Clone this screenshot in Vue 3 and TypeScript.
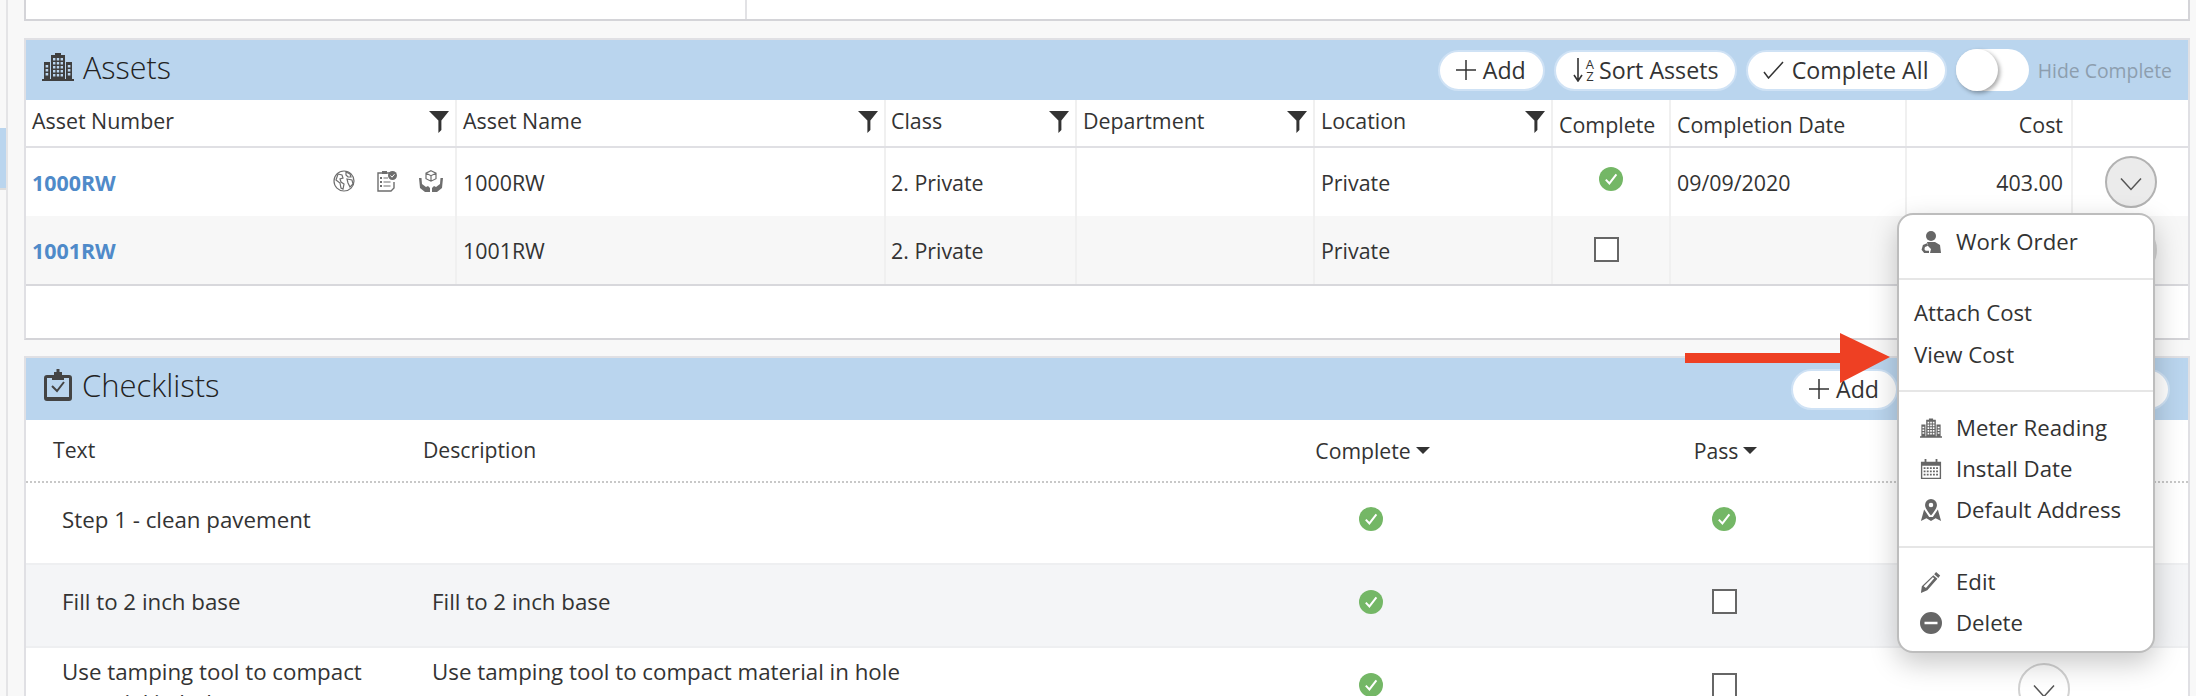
<script setup lang="ts">
const grid = (x0: number, y0: number, cols: number, rows: number, w: number, h: number, gx: number, gy: number): string => {
  let d = ''
  for (let c = 0; c < cols; c++) {
    for (let r = 0; r < rows; r++) {
      d += `M${x0 + c * gx} ${y0 + r * gy}h${w}v${h}h${-w}z`
    }
  }
  return d
}
const buildingPath =
  'M13 0h6v2h-6zM9 2h14v24H9zM2 9h6v17H2zM24 9h6v17h-6zM0 26h32v2H0z' +
  grid(11, 5, 3, 5, 2.4, 2.4, 3.8, 4) +
  grid(3.6, 12, 1, 3, 2.6, 2.4, 0, 4) +
  grid(25.8, 12, 1, 3, 2.6, 2.4, 0, 4)
const calendarPath = 'M1 4h4V1h2v3h10V1h2v3h4v19H1zM2.5 8.5v13h19v-13z'
const calendarCells = grid(4, 10, 5, 3, 2, 2, 3.4, 3.6)

interface AssetRow { num: string; name: string; cls: string; loc: string; done: boolean; date: string; cost: string; icons: boolean; open: boolean }
const assetCols = [
  { label: 'Asset Number', filter: true },
  { label: 'Asset Name', filter: true },
  { label: 'Class', filter: true },
  { label: 'Department', filter: true },
  { label: 'Location', filter: true },
  { label: 'Complete', filter: false },
  { label: 'Completion Date', filter: false },
  { label: 'Cost', filter: false, right: true },
  { label: '', filter: false }
]
const assets: AssetRow[] = [
  { num: '1000RW', name: '1000RW', cls: '2. Private', loc: 'Private', done: true, date: '09/09/2020', cost: '403.00', icons: true, open: true },
  { num: '1001RW', name: '1001RW', cls: '2. Private', loc: 'Private', done: false, date: '', cost: '', icons: false, open: false }
]
const checks = [
  { text: 'Step 1 - clean pavement', desc: '', complete: true, pass: true, tall: false },
  { text: 'Fill to 2 inch base', desc: 'Fill to 2 inch base', complete: true, pass: false, tall: false },
  { text: 'Use tamping tool to compact material in hole', desc: 'Use tamping tool to compact material in hole', complete: true, pass: false, tall: true }
]
</script>

<template>
  <div class="page">
    <svg class="defs" aria-hidden="true">
      <symbol id="i-build" viewBox="0 0 32 28"><path fill="currentColor" fill-rule="evenodd" :d="buildingPath" /></symbol>
      <symbol id="i-funnel" viewBox="0 0 20 22"><path fill="currentColor" d="M0 0h20l-7.6 9.6V19l-3 3V9.6z" /></symbol>
      <symbol id="i-check" viewBox="0 0 24 24"><circle cx="12" cy="12" r="12" fill="#74b766" /><path d="M6.8 12.6l3.6 3.8 7-9" fill="none" stroke="#fff" stroke-width="2" /></symbol>
      <symbol id="i-chev" viewBox="0 0 22 14"><path d="M1 1.5l10 11 10-11" fill="none" stroke="currentColor" stroke-width="1.5" /></symbol>
      <symbol id="i-globe" viewBox="0 0 22 22">
        <circle cx="11" cy="11" r="10" fill="none" stroke="currentColor" stroke-width="1.2" />
        <path fill="none" stroke="currentColor" stroke-width="1.2" d="M5 4l4 1 1 3-3 1 1 3 3 2-1 5-2-1-1-5-4-3zM13 2l4 2 1 3-3 0-2-2zM14 9l5 1 1 4-3 3-2-4z" />
      </symbol>
      <symbol id="i-clip" viewBox="0 0 20 22">
        <path fill="none" stroke="currentColor" stroke-width="1.4" d="M14 3H1v18h13l3-3v-6" />
        <path fill="currentColor" d="M5 1h5v3H5zM3 7h2v2H3zM3 11h2v2H3zM3 15h2v2H3zM6.5 7.5H11v1H6.5zM6.5 11.500h7v1h-7zM6.500 15.500h7v1h-7z" />
        <circle cx="15.500" cy="5.500" r="4.500" fill="currentColor" />
        <path d="M13.500 5.500l1.500 1.700 2.500-3" fill="none" stroke="#fff" stroke-width="1" />
      </symbol>
      <symbol id="i-hands" viewBox="0 0 24 22">
        <path fill="none" stroke="currentColor" stroke-width="1.200" d="M12 .7l5 2.500v5.500l-5 2.500-5-2.500V3.200zM7 3.200l5 2.500 5-2.500M12 5.700v5.500" />
        <path fill="currentColor" d="M0 8h2.500l.5 6 4 3 2-1 2 2v4H6l-5-4zM24 8h-2.500l-.5 6-4 3-2-1-2 2v4h5l5-4z" />
      </symbol>
      <symbol id="i-person" viewBox="0 0 20 22">
        <circle cx="10" cy="5" r="5" fill="currentColor" />
        <path fill="currentColor" d="M6 11h8l5 3 1 8H9l1-4-3-3z" />
        <path fill="none" stroke="currentColor" stroke-width="2.600" d="M6.500 13.500l-3.500 1.500-1 3.500 2 2.500h4" />
      </symbol>
      <symbol id="i-cal" viewBox="0 0 24 24">
        <path fill="currentColor" fill-rule="evenodd" :d="calendarPath" />
        <path fill="currentColor" :d="calendarCells" />
      </symbol>
      <symbol id="i-pin" viewBox="0 0 22 24">
        <path fill="currentColor" fill-rule="evenodd" d="M11 0a6.500 6.500 0 0 1 6.500 6.500C17.500 10 13.500 15 11 18 8.500 15 4.500 10 4.500 6.500A6.500 6.500 0 0 1 11 0zm0 4a2.500 2.500 0 1 0 0 5 2.500 2.500 0 0 0 0-5z" />
        <path fill="currentColor" d="M3.500 11.500l5.500 8h4l5.500-8L22 24l-6-3-5 3-5-3-6 3z" />
      </symbol>
      <symbol id="i-pencil" viewBox="0 0 22 24">
        <path fill="currentColor" d="M16.500 1l4.500 4-2 2.500-4.500-4zM13.500 4.500l4.500 4L7 21l-7 3 1-7.500zM3 16.500l2.500 2 9-10.500-1.500-1.200z" fill-rule="evenodd" />
      </symbol>
      <symbol id="i-minus" viewBox="0 0 22 22">
        <path fill="currentColor" fill-rule="evenodd" d="M11 0a11 11 0 1 1 0 22 11 11 0 0 1 0-22zM4.500 9.800v2.400h13V9.800z" />
      </symbol>
      <symbol id="i-clipcheck" viewBox="0 0 28 32">
        <path fill="currentColor" fill-rule="evenodd" d="M10 3h2.500V0h3v3H18v3h7a3 3 0 0 1 3 3v20a3 3 0 0 1-3 3H3a3 3 0 0 1-3-3V9a3 3 0 0 1 3-3h7zM3 9v19h22V9h-5v2H8V9z" />
        <path fill="none" stroke="currentColor" stroke-width="2" d="M8 17l5 5 7-9" />
      </symbol>
    </svg>

    <aside class="side"><div class="side-active"></div></aside>

    <main class="main">
      <div class="top-card"><div class="top-left"></div><div class="top-right"></div></div>

      <section class="panel assets">
        <header class="bar">
          <h2 class="title"><svg class="t-build"><use href="#i-build" /></svg>Assets</h2>
          <div class="tools">
            <button class="pill pill-add"><svg class="plus" viewBox="0 0 20 20"><path d="M10 0v20M0 10h20" stroke="currentColor" stroke-width="1.500" /></svg>Add</button>
            <button class="pill pill-sort">
              <svg class="sort-arrow" viewBox="0 0 10 24"><path d="M5 0v22M1 17l4 6 4-6" fill="none" stroke="currentColor" stroke-width="1.600" /></svg>
              <span class="az"><span>A</span><span>Z</span></span>Sort Assets
            </button>
            <button class="pill pill-all"><svg class="tick" viewBox="0 0 21 18"><path d="M1 11l4.500 6L20 1" fill="none" stroke="currentColor" stroke-width="1.500" /></svg>Complete All</button>
            <div class="toggle"><div class="knob"></div></div>
            <span class="hide-label">Hide Complete</span>
          </div>
        </header>
        <div class="a-row a-head">
          <div v-for="c in assetCols" :key="c.label" class="a-cell" :class="{ right: c.right, low: !c.filter }">
            <span>{{ c.label }}</span>
            <svg v-if="c.filter" class="funnel"><use href="#i-funnel" /></svg>
          </div>
        </div>
        <div v-for="(r, i) in assets" :key="r.num" class="a-row a-body" :class="{ alt: i === 1 }">
          <div class="a-cell">
            <a class="link">{{ r.num }}</a>
            <span v-if="r.icons" class="row-icons">
              <svg class="ri ri-globe"><use href="#i-globe" /></svg>
              <svg class="ri ri-clip"><use href="#i-clip" /></svg>
              <svg class="ri ri-hands"><use href="#i-hands" /></svg>
            </span>
          </div>
          <div class="a-cell">{{ r.name }}</div>
          <div class="a-cell">{{ r.cls }}</div>
          <div class="a-cell"></div>
          <div class="a-cell">{{ r.loc }}</div>
          <div class="a-cell center">
            <svg v-if="r.done" class="ok"><use href="#i-check" /></svg>
            <span v-else class="box box-a"></span>
          </div>
          <div class="a-cell">{{ r.date }}</div>
          <div class="a-cell right">{{ r.cost }}</div>
          <div class="a-cell center">
            <button class="round" :class="{ on: r.open }"><svg class="chev"><use href="#i-chev" /></svg></button>
          </div>
        </div>
        <div class="a-blank"></div>
      </section>

      <section class="panel checklists">
        <header class="bar">
          <h2 class="title"><svg class="t-clip"><use href="#i-clipcheck" /></svg>Checklists</h2>
          <div class="tools tools-c">
            <button class="pill pill-add"><svg class="plus" viewBox="0 0 20 20"><path d="M10 0v20M0 10h20" stroke="currentColor" stroke-width="1.500" /></svg>Add</button>
            <div class="pill pill-blank"></div>
          </div>
        </header>
        <div class="c-row c-head">
          <div class="c-h-text">Text</div>
          <div class="c-h-desc">Description</div>
          <div class="c-mid c-mid-h">Complete<i class="caret"></i></div>
          <div class="c-mid c-mid-h">Pass<i class="caret"></i></div>
          <div></div>
        </div>
        <div v-for="(r, i) in checks" :key="r.text" class="c-row c-body" :class="{ alt: i === 1, tall: r.tall }">
          <div class="c-text">{{ r.text }}</div>
          <div class="c-desc">{{ r.desc }}</div>
          <div class="c-mid">
            <svg v-if="r.complete" class="ok ok-c"><use href="#i-check" /></svg>
            <span v-else class="box"></span>
          </div>
          <div class="c-mid">
            <svg v-if="r.pass" class="ok ok-c"><use href="#i-check" /></svg>
            <span v-else class="box"></span>
          </div>
          <div class="c-mid c-act"><button class="round"><svg class="chev"><use href="#i-chev" /></svg></button></div>
        </div>
      </section>
    </main>

    <nav class="menu">
      <div class="m-sec s1">
        <div class="m-item"><span class="mi"><svg class="m-ic"><use href="#i-person" /></svg></span>Work Order</div>
      </div>
      <div class="m-sec s2">
        <div class="m-item plain">Attach Cost</div>
        <div class="m-item plain">View Cost</div>
      </div>
      <div class="m-sec s3">
        <div class="m-item"><span class="mi"><svg class="m-ic"><use href="#i-build" /></svg></span>Meter Reading</div>
        <div class="m-item"><span class="mi"><svg class="m-ic"><use href="#i-cal" /></svg></span>Install Date</div>
        <div class="m-item"><span class="mi"><svg class="m-ic"><use href="#i-pin" /></svg></span>Default Address</div>
      </div>
      <div class="m-sec s4">
        <div class="m-item"><span class="mi"><svg class="m-ic"><use href="#i-pencil" /></svg></span>Edit</div>
        <div class="m-item"><span class="mi"><svg class="m-ic"><use href="#i-minus" /></svg></span>Delete</div>
      </div>
    </nav>

    <svg class="arrow" viewBox="0 0 205 50"><path fill="#ee4023" d="M0 20h155V0l50 24-50 26V30H0z" /></svg>
  </div>
</template>

<style>
html, body { margin: 0; background: #f8f8f8; }
</style>

<style scoped>
.page {
  position: relative;
  display: flex;
  width: 2196px;
  height: 696px;
  overflow: hidden;
  background: #f8f8f8;
  color: #333;
  font-family: "Open Sans", "Liberation Sans", sans-serif;
  font-size: 21.4px;
}
.defs { position: absolute; width: 0; height: 0; }
.side {
  width: 6px;
  flex: none;
  border-right: 2px solid #e4e4e6;
  padding-top: 128px;
}
.side-active { height: 60px; background: #bad5ee; border-bottom: 2px solid #ddd; }
.main { flex: none; width: 2166px; margin-left: 16px; }
.top-card {
  display: flex;
  height: 19px;
  border: 2px solid #d4d4d8;
  border-top: 0;
  background: #fff;
}
.top-left { width: 719px; border-right: 2px solid #e2e2e5; }
.panel {
  margin-top: 17px;
  border: 2px solid #e0e0e4;
  background: #fff;
}
.assets { border-bottom-color: #d4d4d8; }
.checklists { margin-top: 16px; border-bottom: 0; }
.bar {
  display: flex;
  align-items: center;
  justify-content: space-between;
  height: 60px;
  background: #bad5ee;
}
.checklists .bar { height: 62px; }
.title {
  display: flex;
  align-items: center;
  margin: 0 0 6px 16px;
  font-size: 30.5px;
  font-weight: 300;
  color: #222;
}
.checklists .title { margin: 0 0 9px 18px; font-size: 31px; }
.t-build { width: 32px; height: 28px; margin-right: 9px; color: #3f3f3f; }
.t-clip { width: 28px; height: 32px; margin-right: 10px; color: #444; }
.tools { display: flex; align-items: center; }
.tools-c { padding-right: 18px; }
.pill {
  display: inline-flex;
  align-items: center;
  box-sizing: border-box;
  height: 41px;
  margin-right: 9px;
  padding: 0;
  border: 2px solid #cfe2f5;
  border-radius: 21px;
  background: #fff;
  color: #333;
  font: 400 23.200px "Open Sans", sans-serif;
}
.pill-add { width: 107px; padding-left: 16px; }
.pill-sort { width: 183px; padding-left: 17px; }
.pill-all { width: 201px; padding-left: 15px; }
.pill-blank { width: 210px; margin-right: 0; margin-left: 53px; }
.plus { width: 20px; height: 20px; margin-right: 7px; flex: none; }
.sort-arrow { width: 10px; height: 24px; flex: none; }
.az { display: inline-flex; flex-direction: column; margin: 0 5px 0 3px; font-size: 13px; line-height: 12px; }
.tick { width: 21px; height: 18px; margin-right: 8px; flex: none; }
.toggle {
  width: 73px;
  height: 42px;
  border-radius: 21px;
  background: #fff;
}
.knob {
  width: 42px;
  height: 42px;
  border-radius: 50%;
  background: #fff;
  box-shadow: 2px 2px 4px rgba(0, 0, 0, .35);
}
.hide-label { margin: 0 16px 0 9px; font-size: 19.400px; color: #8d9eae; }
.a-row {
  display: grid;
  grid-template-columns: 429px 429px 191px 238px 238px 118px 236px 166px 117px;
}
.a-head { height: 46px; border-bottom: 2px solid #e0e0e4; }
.a-body { height: 68px; }
.a-body.alt { background: #f7f7f7; border-bottom: 2px solid #d8d8dc; }
.a-cell {
  position: relative;
  display: flex;
  align-items: center;
  box-sizing: border-box;
  padding: 0 6px;
  border-left: 2px solid #f0f0f0;
  white-space: nowrap;
}
.a-cell:first-child { border-left: 0; }
.a-cell:nth-child(3) { padding-left: 5px; }
.a-head .a-cell { padding-bottom: 6px; }
.a-head .a-cell.low { padding-bottom: 0; padding-top: 2px; }
.a-cell.right { justify-content: flex-end; padding-right: 8px; }
.a-cell.center { justify-content: center; }
.funnel { position: absolute; right: 6px; top: 11px; width: 20px; height: 22px; color: #333; }
.link { font-weight: 700; color: #4f8ac9; }
.row-icons { position: absolute; top: 22px; left: 307px; display: flex; gap: 22px; color: #6e6e6e; }
.ri { height: 22px; display: block; }
.ri-globe { width: 22px; }
.ri-clip { width: 20px; }
.ri-hands { width: 24px; }
.ok { width: 24px; height: 24px; margin-top: -6px; }
.ok-c { margin-top: 0; }
.box {
  box-sizing: border-box;
  width: 25px;
  height: 25px;
  border: 2px solid #666;
  background: #fff;
}
.box-a { margin: -2px 10px 0 0; }
.round {
  display: inline-flex;
  align-items: center;
  justify-content: center;
  box-sizing: border-box;
  width: 52px;
  height: 52px;
  padding: 0;
  border: 2px solid #d2d2d2;
  border-radius: 50%;
  background: #fff;
  color: #555;
}
.round.on { background: #ebebeb; border-color: #b2b2b2; }
.chev { width: 22px; height: 14px; margin-top: 4px; }
.a-blank { height: 52px; }
.c-row {
  display: grid;
  grid-template-columns: 392px 782px 342px 364px 282px;
  align-items: center;
}
.c-head {
  height: 61px;
  border-bottom: 2px dotted #c8c8c8;
  font-size: 21.200px;
}
.c-h-text { padding-left: 27px; margin-top: -3px; }
.c-h-desc { padding-left: 5px; margin-top: -3px; }
.c-mid { display: flex; align-items: center; justify-content: center; }
.c-mid-h { padding-left: 3px; }
.c-act { padding-right: 6px; }
.caret {
  width: 0;
  height: 0;
  margin-left: 5px;
  border: 7px solid transparent;
  border-top: 7px solid #333;
  border-bottom: 0;
}
.c-body {
  height: 82px;
  padding-bottom: 8px;
  box-sizing: border-box;
  border-bottom: 2px solid #eeeff1;
  font-size: 22.300px;
  line-height: 27px;
}
.c-body.alt { background: #f4f5f7; height: 83px; }
.c-body.tall { align-items: start; padding: 8px 0 0; border-bottom: 0; height: 120px; line-height: 31px; }
.c-body.tall .c-mid { margin-top: 17px; }
.c-body.tall .c-act { margin-top: 7px; }
.c-text { padding: 0 30px 0 36px; }
.c-desc { padding-left: 14px; }
.menu {
  position: absolute;
  left: 1897px;
  top: 213px;
  box-sizing: border-box;
  width: 258px;
  height: 440px;
  border: 2px solid #bdbdbd;
  border-radius: 16px;
  background: #fff;
  box-shadow: 0 10px 28px rgba(0, 0, 0, .22);
  font-size: 22.200px;
}
.m-sec { display: flex; flex-direction: column; border-bottom: 2px solid #e6e6e6; }
.m-sec:last-child { border-bottom: 0; }
.s1 { padding: 7px 0 15px; }
.s2 { padding: 13px 0 14px; gap: 1px; }
.s3 { padding: 16px 0 15px; }
.s4 { padding: 14px 0 0; }
.m-item { display: flex; align-items: center; box-sizing: border-box; height: 41px; padding: 0 0 2px 21px; color: #333; }
.m-item.plain { padding-left: 15px; }
.mi { display: flex; width: 36px; flex: none; }
.m-ic { width: 22px; height: 22px; color: #666; }
.arrow { position: absolute; left: 1685px; top: 333px; width: 205px; height: 50px; }
</style>
